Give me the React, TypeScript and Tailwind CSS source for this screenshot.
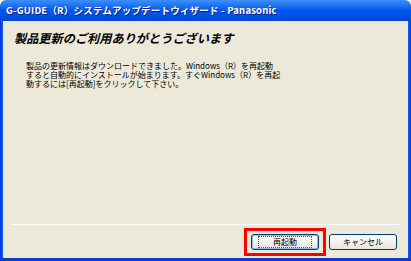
import React from "react";

const jp = { fontFamily: '"Noto Sans CJK JP", "Noto Sans", sans-serif' };

export default function App() {
  return (
    <div className="w-[411px] h-[261px] bg-white flex flex-col overflow-hidden" style={jp}>
      {/* Title bar */}
      <div className="h-[21px] shrink-0 rounded-t-[6px] bg-gradient-to-b from-[#3d8ff7] via-[#0058ee] to-[#0446d6] flex items-center pl-[6px] pt-[1px]">
        <span className="text-white font-bold text-[9.5px] leading-none tracking-[0.2px] [text-shadow:1px_1px_0_#0a1e8c] whitespace-nowrap">
          G-GUIDE（R）システムアップデートウィザード - Panasonic
        </span>
      </div>
      {/* Body */}
      <div className="flex-1 flex flex-row min-h-0">
        <div className="w-[3px] bg-gradient-to-r from-[#0831d9] to-[#1660f0]" />
        <div className="flex-1 bg-[#ece9d8] flex flex-col">
          <div className="pl-[11px] pt-[8px] text-[12.2px] leading-[18px] font-semibold italic text-black whitespace-nowrap">
            製品更新のご利用ありがとうございます
          </div>
          <div className="pl-[23px] pt-[14px] text-[8px] leading-[9px] text-black whitespace-nowrap">
            <div>製品の更新情報はダウンロードできました。Windows（R）を再起動</div>
            <div>すると自動的にインストールが始まります。すぐWindows（R）を再起</div>
            <div>動するには[再起動]をクリックして下さい。</div>
          </div>
          <div className="flex-1" />
          <div className="h-px mx-[9px] bg-[#aca899] border-b border-white" />
          <div className="flex flex-row justify-end items-center pr-[11px] pt-[3px] pb-[2px] gap-[3px]">
            <div className="border-[3px] border-[#ff0000] px-[4px] py-[3px]">
              <button className="w-[68px] h-[16px] rounded-[3px] border border-[#003c74] bg-gradient-to-b from-white to-[#e6e4dc] text-[8px] leading-none text-black flex items-center justify-center shadow-[inset_0_0_0_1px_#98b8ea]">
                <span className="border border-dotted border-[#555] px-[14px] py-[1px]">再起動</span>
              </button>
            </div>
            <button className="w-[68px] h-[16px] rounded-[3px] border border-[#003c74] bg-gradient-to-b from-white to-[#e6e4dc] text-[8px] leading-none text-black flex items-center justify-center">
              キャンセル
            </button>
          </div>
        </div>
        <div className="w-[3px] bg-gradient-to-r from-[#1660f0] to-[#0831d9]" />
      </div>
      <div className="h-[3px] shrink-0 bg-[#0a3ad8]" />
    </div>
  );
}
